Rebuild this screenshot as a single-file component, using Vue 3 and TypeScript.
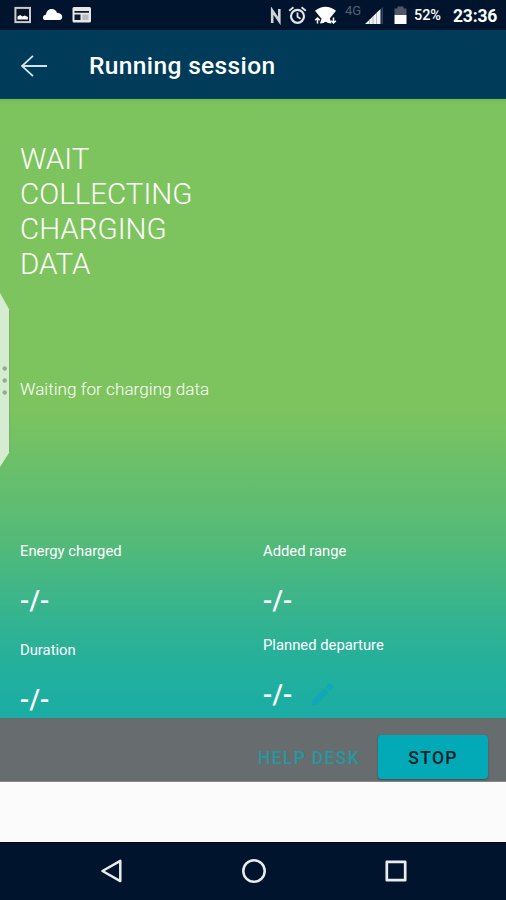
<script setup lang="ts">
interface Metric {
  label: string
  value: string
  editable?: boolean
}

const columns: Metric[][] = [
  [
    { label: 'Energy charged', value: '-/-' },
    { label: 'Duration', value: '-/-' },
  ],
  [
    { label: 'Added range', value: '-/-' },
    { label: 'Planned departure', value: '-/-', editable: true },
  ],
]

const headline: string[] = ['WAIT', 'COLLECTING', 'CHARGING', 'DATA']
</script>

<template>
  <div class="screen">
    <div class="status-bar">
      <svg class="icon picture" width="18" height="18" viewBox="0 0 18 18">
        <rect x="1.400" y="1.900" width="14.600" height="14.200" fill="#071321" stroke="#c9cbce" stroke-width="2" />
        <path d="M3.500 13.500V10.500l2.700-1.500 2.200 1.500 2.500-1 3 1.500v2.500z" fill="#fff" />
      </svg>
      <svg class="icon cloud" width="21" height="13" viewBox="0 0 21 13">
        <path d="M3.500 12C.3 12-.2 7.500 4 6.500 5-.5 13.500-.5 15 4.800c6.500.2 6.500 7.200 2.500 7.200z" fill="#fff" />
      </svg>
      <svg class="icon news" width="20" height="18" viewBox="0 0 20 18">
        <rect x="0.500" y="1" width="18.500" height="15.600" rx="1.500" fill="#e6e7e8" />
        <path d="M2.500 5h14.500v1.700h-14.500zM2.500 8.500h6v5.500h-6z" fill="#101a28" />
        <path d="M10.500 8.500h6v5.500h-6z" fill="#b9bdc2" />
      </svg>
      <span class="spacer"></span>
      <svg class="icon nfc" width="12" height="18" viewBox="0 0 12 18">
        <path d="M2.200 16V3.500L9.300 14V2" fill="none" stroke="#d0d2d5" stroke-width="2.600" />
      </svg>
      <svg class="icon alarm" width="19" height="19" viewBox="0 0 19 19">
        <g fill="none" stroke="#e2e4e6" stroke-width="2.200">
          <circle cx="9.500" cy="10.300" r="6.500" />
          <path d="M1.200 4.700l4.300-3.400M17.800 4.700l-4.300-3.400M9.500 6.500v4.300l3 2" stroke-width="1.800" />
        </g>
      </svg>
      <svg class="icon wifi" width="23" height="19" viewBox="0 0 23 19">
        <path d="M1 4.800Q11.500-3.500 22 4.800L16.500 11.500 11.500 16 6.500 11.500z" fill="#fff" />
        <path d="M3.500 17.500v-5M1.200 14.200L3.500 12l2.300 2.200M19.500 11.500v5.500M17.200 14.800l2.300 2.200 2.300-2.200" fill="none" stroke="#fff" stroke-width="1.500" />
        <path d="M6 17.500L8 11h7.500l2 6.500-3.500-.5-2.500-1.500-2 1.500z" fill="#fff" />
      </svg>
      <span class="network">4G</span>
      <svg class="icon signal" width="20" height="18" viewBox="0 0 20 18">
        <path d="M0 17L15.500 2v15z" fill="#f1f2f3" />
        <path d="M16.500 1.500L18 0v17h-1.500z" fill="#35455b" />
        <path d="M4.500 12v5M8 9v8M11.500 6v11" stroke="#8b929b" stroke-width=".6" />
      </svg>
      <svg class="icon battery" width="14" height="19" viewBox="0 0 14 19">
        <path d="M3.500 .5h6v2h3v6.500H.5V2.500h3z" fill="#4f566d" />
        <path d="M.5 9h12v9H.5z" fill="#fff" />
      </svg>
      <span class="percent">52%</span>
      <span class="clock">23:36</span>
    </div>

    <header class="app-bar">
      <svg class="back" width="28" height="24" viewBox="0 0 28 24">
        <path d="M27 12H2M13 1.800L2 12l11 10.200" fill="none" stroke="#d6e1e8" stroke-width="1.800" />
      </svg>
      <h1 class="title">Running session</h1>
    </header>

    <main class="session">
      <h2 class="headline">
        <span v-for="line in headline" :key="line">{{ line }}</span>
      </h2>
      <p class="message">Waiting for charging data</p>
      <div class="metrics">
        <div v-for="(column, i) in columns" :key="i" class="column">
          <div v-for="metric in column" :key="metric.label" class="metric" :class="{ editable: metric.editable }">
            <span class="label">{{ metric.label }}</span>
            <div class="value-row">
              <span class="value">{{ metric.value }}</span>
              <svg v-if="metric.editable" class="pencil" width="24" height="24" viewBox="0 0 24 24">
                <path d="M1 18.800V23h4.200L17.700 10.500l-4.200-4.200zM22.300 5.900c.5-.5.5-1.200 0-1.700l-2.500-2.500c-.5-.5-1.200-.5-1.700 0L14.800 5l4.200 4.200z" fill="#10a7b8" />
              </svg>
            </div>
          </div>
        </div>
      </div>
      <svg class="edge-handle" width="12" height="176" viewBox="0 0 12 176">
        <path d="M0 1L9.500 18v142L0 175z" fill="#d5ecd0" />
        <path d="M9.700 18v142" stroke="#71a967" stroke-width="1" />
        <g fill="#91ae8e">
          <circle cx="4.700" cy="76.500" r="2.200" />
          <circle cx="4.700" cy="88.500" r="2.200" />
          <circle cx="4.700" cy="100.500" r="2.200" />
        </g>
      </svg>
    </main>

    <footer class="actions">
      <button class="help">HELP DESK</button>
      <button class="stop">STOP</button>
    </footer>
    <div class="blank"></div>

    <nav class="nav-bar">
      <svg width="26" height="26" viewBox="0 0 26 26">
        <path d="M3.500 13L21.300 2.900v20.200z" fill="none" stroke="#e9ebed" stroke-width="2.500" stroke-linejoin="round" />
      </svg>
      <svg width="26" height="26" viewBox="0 0 26 26">
        <circle cx="13" cy="13" r="10.700" fill="none" stroke="#e9ebed" stroke-width="2.500" />
      </svg>
      <svg width="26" height="26" viewBox="0 0 26 26">
        <rect x="3.800" y="3.800" width="18.400" height="18.400" fill="none" stroke="#e9ebed" stroke-width="2.700" stroke-linejoin="round" />
      </svg>
    </nav>
  </div>
</template>

<style>
body {
  margin: 0;
}
</style>

<style scoped>
.screen {
  display: flex;
  flex-direction: column;
  width: 506px;
  height: 900px;
  overflow: hidden;
  background: #fbfbfb;
  font-family: Roboto, "Liberation Sans", sans-serif;
  color: #fff;
}
.status-bar {
  display: flex;
  align-items: center;
  box-sizing: border-box;
  height: 30px;
  padding: 1px 9px 0 14px;
  background: #00152d;
  white-space: nowrap;
}
.icon {
  flex: none;
}
.picture,
.news {
  margin-top: -1px;
}
.cloud {
  margin: -2px 0 0 10px;
}
.news {
  margin-left: 9px;
}
.spacer {
  flex: 1;
}
.alarm {
  margin-left: 6px;
}
.wifi {
  margin-left: 7px;
}
.network {
  width: 16px;
  margin: -10px 0 0 8px;
  font-size: 13px;
  color: #526075;
}
.signal {
  margin-left: 4px;
}
.battery {
  margin-left: 9px;
}
.percent {
  width: 28px;
  margin-left: 6px;
  font-size: 14.5px;
  font-weight: 500;
  letter-spacing: -0.1px;
}
.clock {
  width: 44px;
  margin-left: 11px;
  font-size: 17.5px;
  font-weight: 700;
  letter-spacing: -0.2px;
}
.app-bar {
  display: flex;
  align-items: center;
  box-sizing: border-box;
  height: 69px;
  padding: 3px 20px 0;
  background: #003c5a;
  border-bottom: 1px solid #173f51;
}
.title {
  margin: 0 0 0 41px;
  font-size: 24.500px;
  font-weight: 500;
  line-height: 32px;
  letter-spacing: 0.37px;
}
.session {
  position: relative;
  box-sizing: border-box;
  height: 619px;
  padding: 43px 20px 0;
  overflow: hidden;
  background: linear-gradient(#73bb57 0, #7ec45e 6px, #7ec45e 310px, #67bf6c 376px, #54ba77 441px, #3bb58b 501px, #25b09b 561px, #19ada5 619px);
}
.headline {
  display: flex;
  flex-direction: column;
  margin: 0;
  font-size: 29.5px;
  font-weight: 300;
  line-height: 35px;
}
.message {
  margin: 97px 0 0;
  font-size: 17.2px;
  font-weight: 300;
  line-height: 20px;
}
.metrics {
  display: grid;
  grid-template-columns: 243px 1fr;
  margin-top: 143px;
}
.metric {
  height: 99px;
}
.metric.editable {
  margin-top: -5px;
}
.label {
  display: block;
  font-size: 14.8px;
  line-height: 18px;
}
.value-row {
  display: flex;
  align-items: center;
  height: 30px;
  margin-top: 26px;
}
.value {
  font-size: 27px;
  font-weight: 500;
  line-height: 30px;
  letter-spacing: 0.2px;
}
.pencil {
  width: 24px;
  margin: -3px 0 0 18px;
}
.edge-handle {
  position: absolute;
  left: 0;
  top: 193px;
}
.actions {
  display: flex;
  align-items: flex-start;
  justify-content: flex-end;
  box-sizing: border-box;
  height: 64px;
  padding: 17px 18px 0 0;
  background: #676c6f;
  border-bottom: 1px solid #85898b;
}
button {
  height: 44px;
  padding: 2px 0 0;
  border: 0;
  background: none;
  font-family: inherit;
  font-size: 17.5px;
  font-weight: 500;
  letter-spacing: 1.3px;
}
.help {
  margin-right: 18px;
  color: #25979f;
}
.stop {
  width: 110px;
  border-radius: 4px;
  background: #02a9b7;
  color: #062126;
  box-shadow: 0 1px 2px #3c5256;
}
.blank {
  height: 60px;
  background: #fbfbfb;
}
.nav-bar {
  display: flex;
  justify-content: space-between;
  align-items: center;
  box-sizing: border-box;
  height: 58px;
  padding: 0 97px 1px 99px;
  background: #00152d;
  border-top: 1px solid #03080f;
}
</style>
